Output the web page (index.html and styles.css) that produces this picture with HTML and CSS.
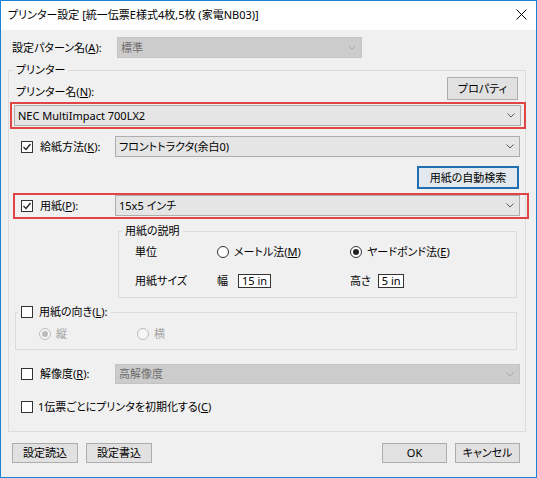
FILE: index.html
```html
<!DOCTYPE html>
<html lang="ja">
<head>
<meta charset="utf-8">
<title>プリンター設定</title>
<link rel="stylesheet" href="styles.css">
</head>
<body>
<div class="window">
  <div class="titlebar">
    <span class="title">プリンター設定 [統一伝票E様式4枚,5枚 (家電NB03)]</span>
    <svg class="close" width="11" height="11" viewBox="0 0 11 11"><path d="M0.5 0.5 L10.5 10.5 M10.5 0.5 L0.5 10.5" stroke="#000" stroke-width="1" fill="none"/></svg>
  </div>
  <div class="content">
    <div class="row pattern">
      <span class="lbl pat-lbl">設定パターン名(<u>A</u>):</span>
      <div class="combo disabled pat-combo"><span>標準</span><svg class="chev" width="8" height="5" viewBox="0 0 8 5"><path d="M0.5 0.5 L4 4 L7.5 0.5" stroke="#a8a8a8" fill="none"/></svg></div>
    </div>

    <fieldset class="grp printer">
      <legend class="lg lg-printer">プリンター</legend>
      <div class="row pname">
        <span class="lbl">プリンター名(<u>N</u>):</span>
        <button class="btn prop">プロパティ</button>
      </div>
      <div class="hl hl1">
        <div class="combo wide"><span>NEC MultiImpact 700LX2</span><svg class="chev" width="8" height="5" viewBox="0 0 8 5"><path d="M0.5 0.5 L4 4 L7.5 0.5" stroke="#5a5a5a" fill="none"/></svg></div>
      </div>
      <div class="row crow feed">
        <span class="cb checked"><svg width="10" height="10" viewBox="0 0 10 10"><path d="M1.5 5 L4 7.5 L8.5 2" stroke="#222" stroke-width="1.3" fill="none"/></svg></span>
        <span class="lbl clbl">給紙方法(<u>K</u>):</span>
        <div class="combo field"><span>フロントトラクタ(余白0)</span><svg class="chev" width="8" height="5" viewBox="0 0 8 5"><path d="M0.5 0.5 L4 4 L7.5 0.5" stroke="#5a5a5a" fill="none"/></svg></div>
      </div>
      <div class="row autorow">
        <button class="btn default">用紙の自動検索</button>
      </div>
      <div class="hl hl2">
        <div class="row crow paper">
          <span class="cb checked"><svg width="10" height="10" viewBox="0 0 10 10"><path d="M1.5 5 L4 7.5 L8.5 2" stroke="#222" stroke-width="1.3" fill="none"/></svg></span>
          <span class="lbl clbl">用紙(<u>P</u>):</span>
          <div class="combo field"><span>15x5 インチ</span><svg class="chev" width="8" height="5" viewBox="0 0 8 5"><path d="M0.5 0.5 L4 4 L7.5 0.5" stroke="#5a5a5a" fill="none"/></svg></div>
        </div>
      </div>

      <fieldset class="grp desc">
        <legend class="lg lg-desc">用紙の説明</legend>
        <div class="row drow first">
          <span class="dlbl">単位</span>
          <span class="opt"><span class="rb"></span><span class="olbl">メートル法(<u>M</u>)</span></span>
          <span class="opt"><span class="rb on"></span><span class="olbl">ヤードポンド法(<u>E</u>)</span></span>
        </div>
        <div class="row drow second">
          <span class="dlbl">用紙サイズ</span>
          <span class="opt"><span>幅</span><span class="inp w-in">15 in</span></span>
          <span class="opt"><span>高さ</span><span class="inp h-in">5 in</span></span>
        </div>
      </fieldset>

      <fieldset class="grp orient">
        <legend class="lg lg-orient"><span class="cb"></span><span class="olbl2">用紙の向き(<u>L</u>):</span></legend>
        <div class="row orow">
          <span class="oopt"><span class="rb dis on"></span><span class="olbl dis-t">縦</span></span>
          <span class="oopt"><span class="rb dis"></span><span class="olbl dis-t">横</span></span>
        </div>
      </fieldset>

      <div class="row crow res">
        <span class="cb"></span>
        <span class="lbl clbl">解像度(<u>R</u>):</span>
        <div class="combo field disabled"><span>高解像度</span><svg class="chev" width="8" height="5" viewBox="0 0 8 5"><path d="M0.5 0.5 L4 4 L7.5 0.5" stroke="#a8a8a8" fill="none"/></svg></div>
      </div>
      <div class="row crow init">
        <span class="cb"></span>
        <span class="lbl ilbl">1伝票ごとにプリンタを初期化する(<u>C</u>)</span>
      </div>
    </fieldset>

    <div class="footer">
      <button class="btn fbtn">設定読込</button>
      <button class="btn fbtn">設定書込</button>
      <span class="spacer"></span>
      <button class="btn fbtn2">OK</button>
      <button class="btn fbtn2">キャンセル</button>
    </div>
  </div>
</div>
</body>
</html>
```
FILE: styles.css
```css
* { box-sizing: border-box; }
html, body { margin: 0; padding: 0; background: #f0f0f0; }
body {
  font-family: "Noto Sans", "Noto Sans CJK JP", sans-serif;
  font-size: 11px;
  line-height: 14px;
  color: #000;
  font-feature-settings: "palt";
}
u { text-decoration: underline; text-underline-offset: 1px; }

.window {
  width: 537px;
  height: 478px;
  border: 1px solid #1883d7;
  background: #f0f0f0;
  display: flex;
  flex-direction: column;
  overflow: hidden;
}
.titlebar {
  height: 29px;
  background: #fff;
  display: flex;
  align-items: center;
  justify-content: space-between;
  padding: 0 9px 2px 7px;
  flex: none;
}
.title { font-size: 11px; }
.close { display: block; }

.content { padding-top: 7px; }

.row { display: flex; align-items: center; }
.lbl { white-space: nowrap; }

.pattern { height: 21px; padding-left: 11px; }
.pat-lbl { width: 105px; }
.pat-combo { width: 245px; }

.combo {
  height: 21px;
  border: 1px solid #adadad;
  background: #e5e5e5;
  display: flex;
  align-items: center;
  justify-content: space-between;
  padding: 0 5px 0 3px;
  white-space: nowrap;
}
.combo.disabled {
  background: #cccccc;
  border-color: #c4c4c4;
  color: #6d6d6d;
}
.chev { display: block; flex: none; }

fieldset.grp {
  margin: 0;
  padding: 0;
  min-width: 0;
  border: 1px solid #dcdcdc;
}
legend.lg {
  padding: 0 3px;
  line-height: 14px;
}
.printer {
  margin: 5px 10px 0 7px !important;
  width: 518px;
  padding-bottom: 14px !important;
}
.lg-printer { margin-left: 4px; }

.pname { height: 23px; padding-left: 7px; align-items: flex-end; }
.pname .lbl { padding-bottom: 1px; }

.btn {
  font: inherit;
  font-feature-settings: "palt";
  color: #000;
  background: #e1e1e1;
  border: 1px solid #adadad;
  padding: 0;
  margin: 0;
  line-height: 14px;
  text-align: center;
}
.prop { width: 71px; height: 23px; margin-left: auto; margin-right: 7px; align-self: flex-start; }

.hl { border: 2px solid #e04545; }
.hl1 { margin: 2px -1px 0 1px; padding: 1px 3px 1px 2px; }
.wide { width: 100%; }

.crow .cb { margin-right: 7px; }
.feed { margin-top: 7px; height: 21px; padding-left: 12px; padding-right: 5px; }
.clbl { flex: 1; }
.field { width: 405px; flex: none; }

.cb {
  width: 12px;
  height: 12px;
  border: 1px solid #333;
  background: #fff;
  flex: none;
  display: flex;
  align-items: center;
  justify-content: center;
}
.cb svg { display: block; }

.autorow { margin-top: 9px; justify-content: flex-end; padding-right: 6px; }
.default {
  width: 102px;
  height: 23px;
  border: 2px solid #1f6fb5;
  background: #e2e8ee;
}

.hl2 { margin: 4px -4px 0 4px; padding: 0 7px 1px 6px; }
.paper { height: 21px; }

.desc {
  margin: 5px 8px 0 109px !important;
  padding: 4px 0 6px 0 !important;
}
.lg-desc { margin-left: 3px; }
.drow { height: 20px; padding-left: 16px; }
.drow.second { margin-top: 9px; }
.dlbl { width: 82px; flex: none; }
.opt { width: 133px; display: flex; align-items: center; flex: none; white-space: nowrap; }
.olbl { margin-left: 5px; }

.rb {
  width: 12px;
  height: 12px;
  border: 1px solid #333;
  border-radius: 50%;
  background: #fff;
  flex: none;
  display: flex;
  align-items: center;
  justify-content: center;
}
.rb.on::after {
  content: "";
  width: 6px;
  height: 6px;
  border-radius: 50%;
  background: #222;
}
.rb.dis { border-color: #bcbcbc; background: #f6f6f6; }
.rb.dis.on::after { background: #bcbcbc; }
.dis-t { color: #a3a3a3; }

.inp {
  height: 14px;
  border: 1px solid #333;
  background: #fff;
  line-height: 12px;
  padding-left: 3px;
  display: flex;
  align-items: center;
}
.w-in { width: 33px; margin-left: 10px; }
.h-in { width: 26px; margin-left: 7px; }

.orient {
  margin: 7px 8px 0 6px !important;
  padding: 5px 0 5px 0 !important;
}
.lg-orient { margin-left: 2px; display: flex; align-items: center; }
.olbl2 { margin-left: 6px; }
.orow { height: 20px; padding-left: 23px; }
.oopt { width: 98px; display: flex; align-items: center; flex: none; }

.res { margin-top: 14px; height: 20px; padding-left: 12px; padding-right: 5px; }
.res .combo { height: 20px; }
.init { margin-top: 13px; height: 20px; padding-left: 12px; }
.init .cb { margin-right: 5px; }

.footer {
  margin-top: 11px;
  display: flex;
  gap: 8px;
  padding: 0 16px 0 11px;
}
.spacer { flex: 1; }
.fbtn { width: 66px; height: 20px; }
.fbtn2 { width: 65px; height: 20px; }
```
